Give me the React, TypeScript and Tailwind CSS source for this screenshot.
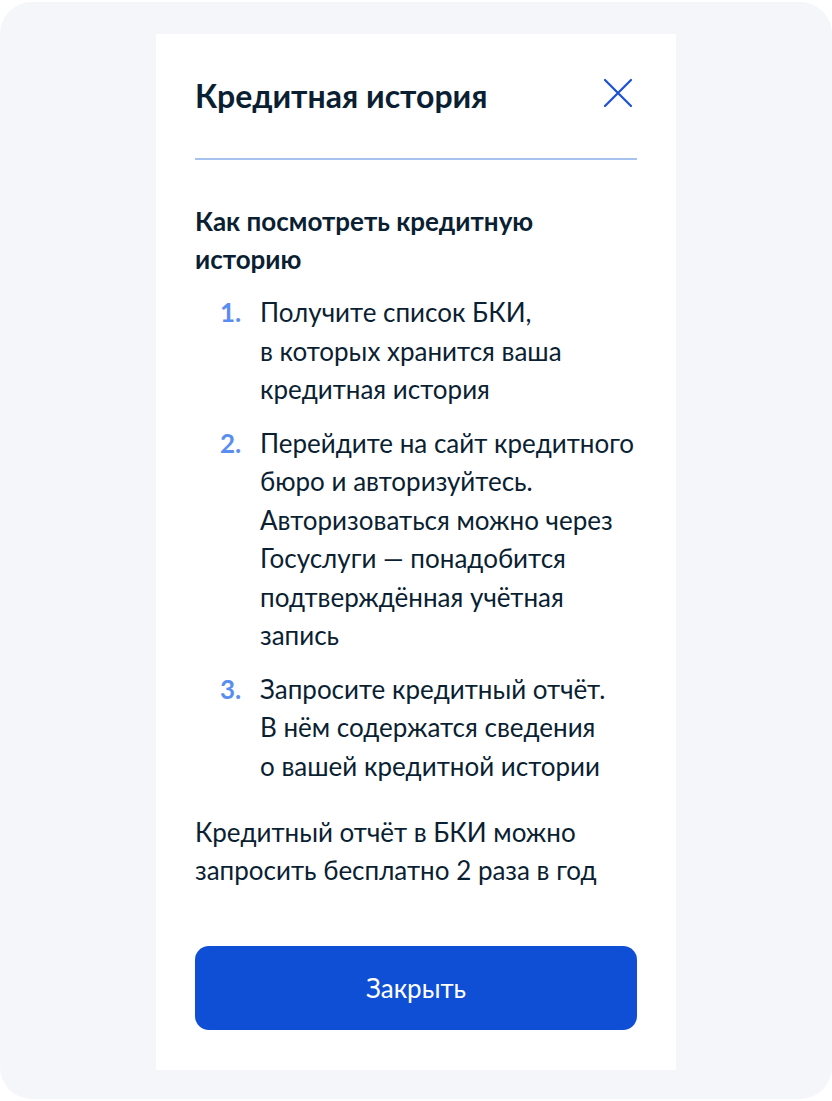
import React from 'react'

const steps: string[][] = [
  ['Получите список БКИ,', 'в которых хранится ваша', 'кредитная история'],
  [
    'Перейдите на сайт кредитного',
    'бюро и авторизуйтесь.',
    'Авторизоваться можно через',
    'Госуслуги — понадобится',
    'подтверждённая учётная',
    'запись',
  ],
  ['Запросите кредитный отчёт.', 'В нём содержатся сведения', 'о вашей кредитной истории'],
]

const App = () => {
  return (
    <div className="w-[832px] h-[1101px] bg-white" style={{ fontFamily: 'Lato, "Noto Sans", sans-serif' }}>
      <div className="h-[1097px] mt-[2px] rounded-[32px] bg-[#f5f6fa] pt-[32px]">
        <div className="ml-[156px] w-[520px] bg-white px-[39px] pt-[42px] pb-[40px] text-[#0b1f33]">
          <div className="flex items-start justify-between">
            <h2 className="text-[32px] leading-[40px] font-bold">Кредитная история</h2>
            <button className="mr-[4px] mt-[2px] text-[#1a4fd8]" aria-label="close">
              <svg width="30" height="30" viewBox="0 0 30 30" fill="none">
                <path d="M2 2 L28 28 M28 2 L2 28" stroke="currentColor" strokeWidth="2.2" strokeLinecap="round" />
              </svg>
            </button>
          </div>
          <div className="mt-[42px] h-[2px] bg-[#a8c2f0]" />

          <h3 className="mt-[42px] text-[26px] leading-[38px] font-bold">
            Как посмотреть кредитную
            <br />
            историю
          </h3>

          <ol className="mt-[15px] flex flex-col gap-[15px]">
            {steps.map((lines, i) => (
              <li key={i} className="flex text-[26px] leading-[38.5px]">
                <span className="w-[65px] pl-[25px] font-bold text-[#5a8df0]">{i + 1}.</span>
                <span>
                  {lines.map((l, j) => (
                    <div key={j}>{l}</div>
                  ))}
                </span>
              </li>
            ))}
          </ol>

          <p className="mt-[28px] text-[26px] leading-[38px]">
            Кредитный отчёт в БКИ можно
            <br />
            запросить бесплатно 2 раза в год
          </p>

          <button className="mt-[57px] w-full h-[84px] rounded-[14px] bg-[#0f4fd6] text-white text-[26px]">
            Закрыть
          </button>
        </div>
      </div>
    </div>
  )
}

export default App
